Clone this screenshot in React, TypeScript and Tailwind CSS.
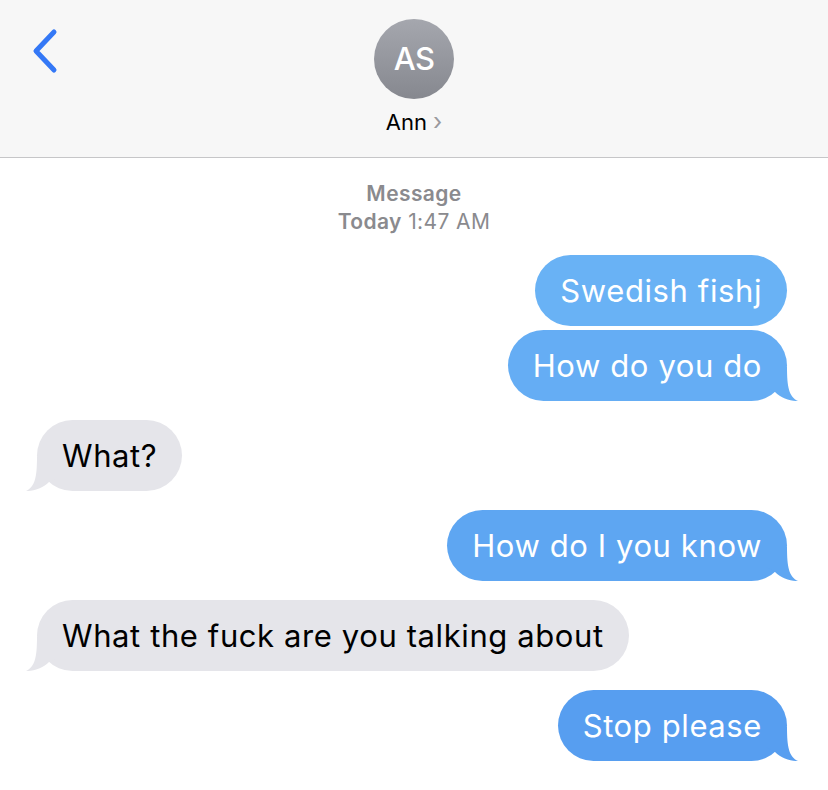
type Msg = {
  text: string;
  fromMe: boolean;
  tail: boolean;
  color: string;
};

const messages: Msg[] = [
  { text: "Swedish fishj", fromMe: true, tail: false, color: "#69b2f5" },
  { text: "How do you do", fromMe: true, tail: true, color: "#65adf4" },
  { text: "What?", fromMe: false, tail: true, color: "#e5e5ea" },
  { text: "How do I you know", fromMe: true, tail: true, color: "#5ea6f2" },
  { text: "What the fuck are you talking about", fromMe: false, tail: true, color: "#e5e5ea" },
  { text: "Stop please", fromMe: true, tail: true, color: "#579ef0" },
];

// bubble tail, drawn for the right side and mirrored for the left
const Tail = ({ color, right }: { color: string; right: boolean }) => (
  <svg
    width="32"
    height="34"
    viewBox="0 0 32 34"
    className={right ? "absolute bottom-0 -right-[11px]" : "absolute bottom-0 -left-[11px] -scale-x-100"}
  >
    <path d="M0 0 H21 C21 20 23 30 32 34 C25 34.3 15 31.5 9 25 L0 20 Z" fill={color} />
  </svg>
);

const Bubble = ({ msg }: { msg: Msg }) => (
  <div className={msg.fromMe ? "flex justify-end pr-[41px]" : "flex justify-start pl-[37px]"}>
    <div
      className={
        "relative rounded-[36px] px-[25px] h-[71px] flex items-center text-[31px] tracking-[0.6px] leading-none " +
        (msg.fromMe ? "text-white" : "text-black")
      }
      style={{ backgroundColor: msg.color }}
    >
      <span className="relative z-10">{msg.text}</span>
      {msg.tail && <Tail color={msg.color} right={msg.fromMe} />}
    </div>
  </div>
);

export default function App() {
  return (
    <div className="w-[828px] h-[790px] bg-white overflow-hidden" style={{ fontFamily: "Inter, 'Liberation Sans', sans-serif" }}>
      <header className="relative h-[158px] bg-[#f7f7f7] border-b border-[#c6c6c8] flex flex-col items-center">
        <button className="absolute left-[30px] top-[27px]">
          <svg width="30" height="48" viewBox="0 0 30 48">
            <path d="M24 5 L6 24 L24 43" fill="none" stroke="#3478f6" strokeWidth="5" strokeLinecap="round" strokeLinejoin="round" />
          </svg>
        </button>
        <div className="mt-[19px] w-[80px] h-[80px] rounded-full bg-gradient-to-b from-[#a5a7ae] to-[#86888f] flex items-center justify-center">
          <span className="text-white text-[31px] font-medium tracking-tight">AS</span>
        </div>
        <div className="mt-[7px] flex items-center gap-[6px] text-[22px] text-black">
          <span>Ann</span>
          <span className="text-[#9a9a9e] text-[24px] leading-none pb-[2px]">&#x203A;</span>
        </div>
      </header>

      <div className="pt-[22px] flex flex-col items-center text-[21px] tracking-[0.4px] leading-[28px] text-[#8a8a8e]">
        <span className="font-semibold">Message</span>
        <span>
          <span className="font-semibold">Today</span> 1:47 AM
        </span>
      </div>

      <div className="mt-[19px] flex flex-col">
        {messages.map((m, i) => (
          <div key={i} className={i === 0 ? "" : i === 1 ? "mt-[4px]" : "mt-[19px]"}>
            <Bubble msg={m} />
          </div>
        ))}
      </div>
    </div>
  );
}
